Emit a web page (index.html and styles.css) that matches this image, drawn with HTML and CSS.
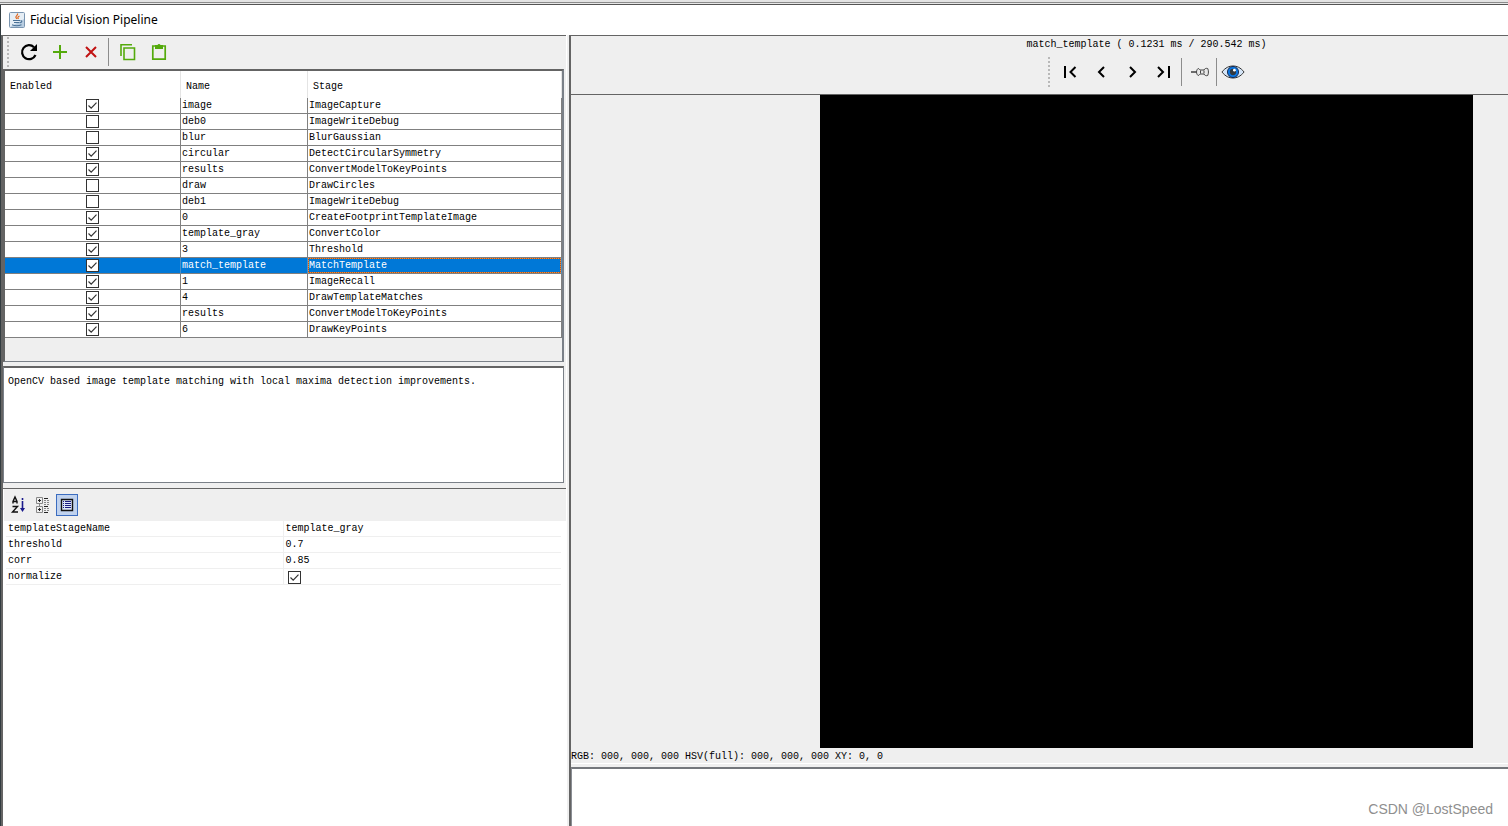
FILE: index.html
```
<!DOCTYPE html>
<html lang="en">
<head>
<meta charset="utf-8">
<title>Fiducial Vision Pipeline</title>
<link rel="stylesheet" href="styles.css">
</head>
<body>
<div class="backdrop"></div>
<div class="window">
  <header class="titlebar">
    <svg class="app-icon" viewBox="0 0 16 16"><rect x=".5" y=".5" width="15" height="15" rx="1" fill="#e6eef5" stroke="#7a95b0"/><path d="M1 15h14V7z" fill="#b9cee2"/><path d="M8.500 1.500c1 1.800-2.500 2.500-1.500 4.200l1 1.300M10.500 4c-2 1-2 1.700-1 3" fill="none" stroke="#e0661b" stroke-width="1.200"/><path d="M4 8.500h7M5 10.500h5.500M11.500 8.500c2 0 1.500 2-.500 2.300M3 12.800c3 1.200 7 1 9.500 0" fill="none" stroke="#4a7196" stroke-width="1.100"/></svg>
    <h1>Fiducial Vision Pipeline</h1>
  </header>
  <div class="panes">
    <section class="left">
      <div class="toolbar">
        <span class="grip"></span>
        <button aria-label="Refresh"><svg viewBox="0 0 20 20"><path d="M16.500 13A7 7 0 1 1 15 5.200" fill="none" stroke="#000" stroke-width="2.200"/><path d="M18 2v7h-7z"/></svg></button>
        <button aria-label="Add stage"><svg viewBox="0 0 20 20"><path d="M10 3v14M3 10h14" stroke="#54aa0c" stroke-width="2"/></svg></button>
        <button aria-label="Remove stage"><svg viewBox="0 0 20 20"><path d="M5 5l10 10M15 5L5 15" stroke="#c11212" stroke-width="2"/></svg></button>
        <span class="sep"></span>
        <button aria-label="Copy"><svg viewBox="0 0 20 20"><path d="M3 14V2.800h11M6 6h10.500v11.500H6z" fill="none" stroke="#54aa0c" stroke-width="1.600"/></svg></button>
        <button aria-label="Paste"><svg viewBox="0 0 20 20"><path d="M3.800 4h12.400v13.200H3.800z" fill="none" stroke="#54aa0c" stroke-width="1.700"/><path d="M6 3h2.500a1.600 1.600 0 0 1 3 0H14v4H6z" fill="#54aa0c"/></svg></button>
      </div>
      <div class="stages">
        <table>
          <colgroup><col class="c-enabled"><col class="c-name"><col></colgroup>
          <thead><tr><th>Enabled</th><th>Name</th><th>Stage</th></tr></thead>
          <tbody>
            <tr><td><input type="checkbox" aria-label="Enable image" checked></td><td>image</td><td>ImageCapture</td></tr>
            <tr><td><input type="checkbox" aria-label="Enable deb0"></td><td>deb0</td><td>ImageWriteDebug</td></tr>
            <tr><td><input type="checkbox" aria-label="Enable blur"></td><td>blur</td><td>BlurGaussian</td></tr>
            <tr><td><input type="checkbox" aria-label="Enable circular" checked></td><td>circular</td><td>DetectCircularSymmetry</td></tr>
            <tr><td><input type="checkbox" aria-label="Enable results" checked></td><td>results</td><td>ConvertModelToKeyPoints</td></tr>
            <tr><td><input type="checkbox" aria-label="Enable draw"></td><td>draw</td><td>DrawCircles</td></tr>
            <tr><td><input type="checkbox" aria-label="Enable deb1"></td><td>deb1</td><td>ImageWriteDebug</td></tr>
            <tr><td><input type="checkbox" aria-label="Enable 0" checked></td><td>0</td><td>CreateFootprintTemplateImage</td></tr>
            <tr><td><input type="checkbox" aria-label="Enable template_gray" checked></td><td>template_gray</td><td>ConvertColor</td></tr>
            <tr><td><input type="checkbox" aria-label="Enable 3" checked></td><td>3</td><td>Threshold</td></tr>
            <tr class="selected"><td><input type="checkbox" aria-label="Enable match_template" checked></td><td>match_template</td><td class="focus">MatchTemplate</td></tr>
            <tr><td><input type="checkbox" aria-label="Enable 1" checked></td><td>1</td><td>ImageRecall</td></tr>
            <tr><td><input type="checkbox" aria-label="Enable 4" checked></td><td>4</td><td>DrawTemplateMatches</td></tr>
            <tr><td><input type="checkbox" aria-label="Enable results" checked></td><td>results</td><td>ConvertModelToKeyPoints</td></tr>
            <tr><td><input type="checkbox" aria-label="Enable 6" checked></td><td>6</td><td>DrawKeyPoints</td></tr>
          </tbody>
        </table>
      </div>
      <div class="description">OpenCV based image template matching with local maxima detection improvements.</div>
      <div class="properties">
        <div class="prop-tools">
          <button aria-label="Sort by name"><svg viewBox="0 0 20 20" fill="none" stroke="#111"><path d="M4 8.500v-2l2-4.500 2 4.500v2M4 6.500h4M3.500 11.500h5l-5 5.500h5.500" stroke-width="1.400"/><path d="M13.500 3v2M13.500 6v9" stroke="#1a1a8c" stroke-width="1.600"/><path d="M11 13h5l-2.500 4z" fill="#1a1a8c" stroke="none"/></svg></button>
          <button aria-label="Group by category"><svg viewBox="0 0 20 20" fill="none" stroke="#888"><path d="M3.500 2.500h6v6h-6zM3.500 11.500h6v6h-6zM6.500 8.500v3"/><path d="M5 5.500h3M6.500 4v3M5 14.500h3M6.500 13v3M11 3.500h4M11 11.500h4M11 17.500h4" stroke="#222"/><path d="M11 5.500h6M11 7.500h6M11 9.500h6M11 13.500h6M11 15.500h6" stroke-dasharray="2 1"/></svg></button>
          <button class="pressed" aria-label="Show description" aria-pressed="true"><svg viewBox="0 0 20 20"><path d="M4.500 4.500h11v11h-11z" fill="#dce6fa" stroke="#111" stroke-width="1.400"/><path d="M6 6.500h1M6 8.500h1M6 10.500h1M6 12.500h1M8 6.500h6M8 8.500h6M8 10.500h6M8 12.500h6" stroke="#1a1a80"/></svg></button>
        </div>
        <table class="prop-table">
          <tbody>
            <tr><td>templateStageName</td><td>template_gray</td></tr>
            <tr><td>threshold</td><td>0.7</td></tr>
            <tr><td>corr</td><td>0.85</td></tr>
            <tr><td><label for="normalize">normalize</label></td><td><input id="normalize" type="checkbox" checked></td></tr>
          </tbody>
        </table>
      </div>
    </section>
    <section class="right">
      <div class="view">
        <div class="view-head">
          <div class="view-title">match_template ( 0.1231 ms / 290.542 ms)</div>
          <div class="view-tools">
            <span class="grip"></span>
            <button aria-label="First stage"><svg viewBox="0 0 20 20"><path d="M5 4v12M15.500 5l-5 5 5 5" fill="none" stroke="#000" stroke-width="2"/></svg></button>
            <button aria-label="Previous stage"><svg viewBox="0 0 20 20"><path d="M13 5l-5 5 5 5" fill="none" stroke="#000" stroke-width="2"/></svg></button>
            <button aria-label="Next stage"><svg viewBox="0 0 20 20"><path d="M8 5l5 5-5 5" fill="none" stroke="#000" stroke-width="2"/></svg></button>
            <button aria-label="Last stage"><svg viewBox="0 0 20 20"><path d="M16 4v12M5 5l5 5-5 5" fill="none" stroke="#000" stroke-width="2"/></svg></button>
            <span class="sep"></span>
            <button class="pin" aria-label="Pin output"><svg viewBox="0 0 20 20"><path d="M1 10h6" stroke="#333" stroke-width="1.400"/><path d="M8 6.500c-2 2-2 5 0 7 1 0 1.500-1 2-1.500h4c.7 1.500 2 2 3.700 1.500 1-2 1-5 0-7-1.700-.5-3 0-3.700 1.500h-4c-.5-.5-1-1.500-2-1.500z" fill="#e8e8e8" stroke="#444"/><path d="M10.500 8.500v3M14 8.500v3" stroke="#444"/></svg></button>
            <span class="sep"></span>
            <button class="eye" aria-label="Toggle preview"><svg viewBox="0 0 26 20"><path d="M1 10C5 5 9 3.500 13 3.500S21 5 25 10c-4 5-8 6.500-12 6.500S5 15 1 10z" fill="#d5e5f7" stroke="#222"/><circle cx="13" cy="10" r="6" fill="#0b78e6" stroke="#124"/><circle cx="13" cy="10" r="3.400" fill="#333a40"/><circle cx="14.500" cy="8" r="1.500" fill="#fff"/></svg></button>
          </div>
        </div>
        <div class="image-area"><div class="image"></div></div>
        <div class="status">RGB: 000, 000, 000 HSV(full): 000, 000, 000 XY: 0, 0</div>
      </div>
      <div class="output"><span class="watermark">CSDN @LostSpeed</span></div>
    </section>
  </div>
</div>
</body>
</html>
```
FILE: styles.css
```
* { box-sizing: border-box; }
body {
  margin: 0;
  height: 100vh;
  overflow: hidden;
  display: flex;
  flex-direction: column;
  background: #fff;
  color: #000;
  font: 10px/16px "Liberation Mono", monospace;
}
.backdrop {
  height: 5px;
  flex: none;
  background: linear-gradient(#e4e4e4 2px, #8c8c8c 2px 3px, #e8e8e8 3px 4px, #555 4px);
}
.window {
  flex: 1;
  min-height: 0;
  display: flex;
  flex-direction: column;
  border-left: 1px solid #333c40;
}
.titlebar {
  flex: none;
  height: 30px;
  display: flex;
  align-items: center;
  gap: 5px;
  padding-left: 8px;
}
.app-icon { width: 16px; height: 16px; }
h1 { margin: 0; font: 12px/16px "Noto Sans", sans-serif; }
.panes {
  flex: 1;
  min-height: 0;
  display: grid;
  grid-template-columns: 565px 1fr;
  gap: 3px;
  background: linear-gradient(90deg, #fff 566px, #efefef 566px);
}
.left {
  min-height: 0;
  display: flex;
  flex-direction: column;
  border-left: 2px solid #646464;
  border-top: 1px solid #646464;
  background: #efefef;
}
button {
  width: 22px;
  height: 22px;
  padding: 0;
  border: 1px solid transparent;
  background: none;
  flex: none;
}
button svg { display: block; width: 20px; height: 20px; }
.toolbar {
  flex: none;
  height: 33px;
  display: flex;
  align-items: center;
  gap: 9px;
  padding: 0 0 2px 4px;
}
.grip {
  width: 2px;
  height: 30px;
  background: repeating-linear-gradient(#b8b8b8 0 2px, transparent 2px 4px);
}
.sep { width: 1px; height: 28px; background: #8c8c8c; }
.toolbar .sep { margin: 0 -1px 0 -3px; }
.stages {
  flex: none;
  height: 293px;
  margin-right: 2px;
  border: 1px solid #7a7f86;
  border-width: 2px 2px 1px;
  border-color: #646464 #7a8088 #7a8088 #646464;
}
table { width: 100%; border-collapse: separate; border-spacing: 0; table-layout: fixed; }
.c-enabled { width: 176px; }
.c-name { width: 127px; }
th {
  height: 27px;
  padding: 4px 5px 0;
  text-align: left;
  font-weight: normal;
  background: #fff;
  border-right: 1px solid #e4e4e4;
}
td { height: 16px; padding: 0 1px; line-height: 15px; white-space: nowrap; }
.stages td { background: #fff; border-right: 1px solid #808080; border-bottom: 1px solid #808080; }
.stages td:not(:first-child) { padding-top: 1px; line-height: 14px; }
.stages .selected td { background: #0078d7; color: #fff; border-right-color: #4a90c8; }
.stages .selected td.focus {
  --dots: #ff8728 0 1px, #a05a30 1px 2px;
  background:
    repeating-linear-gradient(90deg, var(--dots)) 0 0 / 100% 1px no-repeat,
    repeating-linear-gradient(90deg, var(--dots)) 0 100% / 100% 1px no-repeat,
    repeating-linear-gradient(var(--dots)) 0 0 / 1px 100% no-repeat,
    repeating-linear-gradient(var(--dots)) 100% 0 / 1px 100% no-repeat,
    #0078d7;
  background-clip: padding-box;
  background-origin: padding-box;
}
input[type="checkbox"] {
  appearance: none;
  display: block;
  width: 13px;
  height: 13px;
  margin: 0 auto;
  border: 1px solid #333;
  background: #fff;
}
input[type="checkbox"]:checked {
  background: #fff url("data:image/svg+xml,%3Csvg xmlns='http://www.w3.org/2000/svg' viewBox='0 0 11 11'%3E%3Cpath d='M1.500 5.500l2.700 2.700 5.300-5.500' fill='none' stroke='%23333' stroke-width='1.200'/%3E%3C/svg%3E");
}
.description {
  flex: none;
  height: 117px;
  margin: 4px 2px 0 0;
  padding: 6px 4px;
  background: #fff;
  border: 1px solid #7a8088;
  border-top: 2px solid #646464;
}
.properties {
  flex: 1;
  min-height: 0;
  margin-top: 5px;
  border-top: 1px solid #646464;
  padding-left: 1px;
  background: #fff;
}
.prop-tools {
  height: 32px;
  display: flex;
  align-items: center;
  gap: 2px;
  padding-left: 4px;
  background: #efefef;
}
.prop-tools .pressed { border-color: #3b6cbf; background: #c0d2ee; }
.prop-table { width: 555px; margin-left: 2px; }
.prop-table td { border-bottom: 1px solid #efefef; padding: 1px 2px 0; line-height: 14px; }
.prop-table td:first-child { border-right: 1px solid #efefef; }
.prop-table input { margin: 0 2px; }
.right {
  min-width: 0;
  overflow: hidden;
  display: flex;
  flex-direction: column;
  border-left: 2px solid #646464;
  border-top: 1px solid #646464;
  background: #efefef;
}
/* The viewer is wider than the visible part of its pane. */
.view { flex: none; width: calc(100% + 214px); }
.view-head {
  height: 59px;
  display: flex;
  flex-direction: column;
  align-items: center;
  padding-top: 1px;
  border-bottom: 1px solid #646464;
}
.view-title { height: 20px; }
.view-tools { display: flex; align-items: center; gap: 9px; }
.view-tools .sep { height: 28px; margin: 0 -4px 0 -2px; }
.view-tools .pin { margin: 0 -2px 0 2px; }
.view-tools .eye { width: 26px; margin-left: -2px; }
.view-tools .eye svg { width: 24px; }
.image-area { display: flex; justify-content: center; }
.image { width: 653px; aspect-ratio: 1; background: #000; }
.status { height: 16px; line-height: 18px; white-space: nowrap; border-bottom: 1px solid #fff; }
.output {
  flex: 1;
  margin-top: 3px;
  border-top: 2px solid #74777c;
  border-left: 1px solid #8a8e94;
  background: #fff;
  display: flex;
  justify-content: flex-end;
  align-items: flex-end;
  padding: 0 15px 9px;
}
.watermark { font: 14px/16px "Liberation Sans", sans-serif; color: #8f8f8f; }
```
